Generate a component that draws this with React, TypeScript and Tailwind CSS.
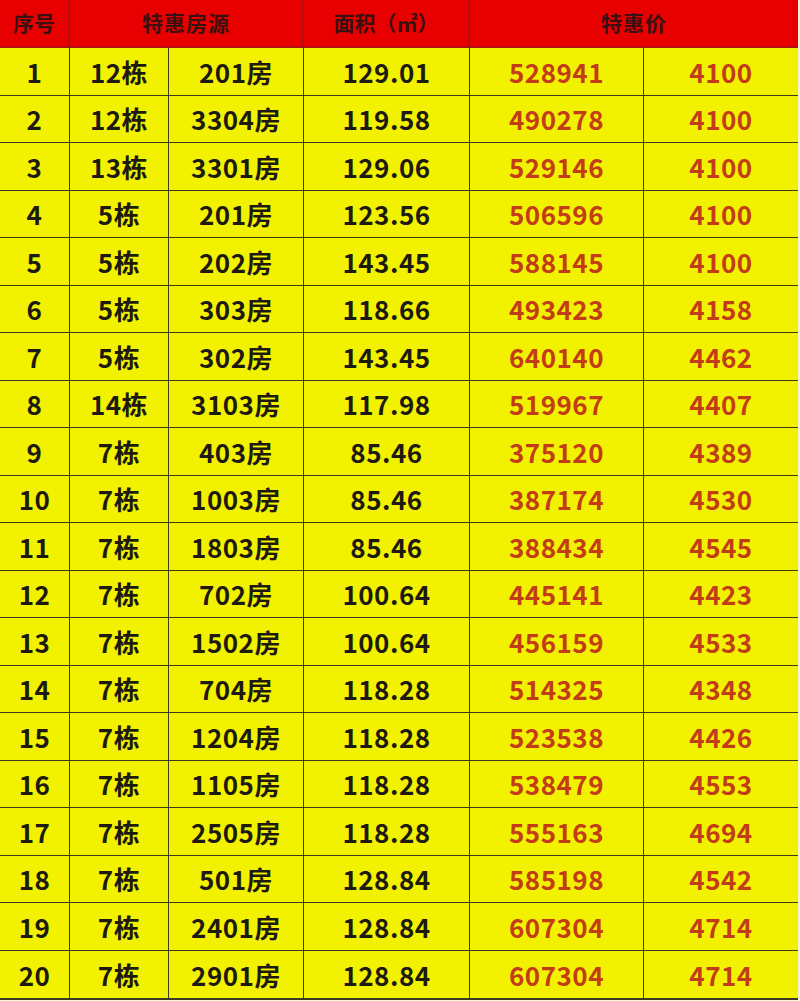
import React from "react";

const rows: [string, string, string, string, string, string][] = [
  ["1", "12栋", "201房", "129.01", "528941", "4100"],
  ["2", "12栋", "3304房", "119.58", "490278", "4100"],
  ["3", "13栋", "3301房", "129.06", "529146", "4100"],
  ["4", "5栋", "201房", "123.56", "506596", "4100"],
  ["5", "5栋", "202房", "143.45", "588145", "4100"],
  ["6", "5栋", "303房", "118.66", "493423", "4158"],
  ["7", "5栋", "302房", "143.45", "640140", "4462"],
  ["8", "14栋", "3103房", "117.98", "519967", "4407"],
  ["9", "7栋", "403房", "85.46", "375120", "4389"],
  ["10", "7栋", "1003房", "85.46", "387174", "4530"],
  ["11", "7栋", "1803房", "85.46", "388434", "4545"],
  ["12", "7栋", "702房", "100.64", "445141", "4423"],
  ["13", "7栋", "1502房", "100.64", "456159", "4533"],
  ["14", "7栋", "704房", "118.28", "514325", "4348"],
  ["15", "7栋", "1204房", "118.28", "523538", "4426"],
  ["16", "7栋", "1105房", "118.28", "538479", "4553"],
  ["17", "7栋", "2505房", "118.28", "555163", "4694"],
  ["18", "7栋", "501房", "128.84", "585198", "4542"],
  ["19", "7栋", "2401房", "128.84", "607304", "4714"],
  ["20", "7栋", "2901房", "128.84", "607304", "4714"],
];

const font = { fontFamily: '"Noto Sans CJK SC", "Noto Sans", sans-serif' };

export default function App() {
  return (
    <div className="w-[800px] h-[1001px] bg-[#f4f4d8] overflow-hidden" style={font}>
      <div className="grid grid-cols-[70px_99px_135px_166px_174px_154px] w-[798px] border-r-2 border-b-2 border-[#3a3a20]">
        <div className="h-[48px] bg-[#e80000] border-r-2 border-b-2 border-[#b01010] flex items-center justify-center text-[21px] font-bold text-[#3a1010]">序号</div>
        <div className="col-span-2 h-[48px] bg-[#e80000] border-r-2 border-b-2 border-[#b01010] flex items-center justify-center text-[21px] font-bold text-[#3a1010] tracking-[1px]">特惠房源</div>
        <div className="h-[48px] bg-[#e80000] border-r-2 border-b-2 border-[#b01010] flex items-center justify-center text-[21px] font-bold text-[#3a1010]">面积（㎡）</div>
        <div className="col-span-2 h-[48px] bg-[#e80000] border-b-2 border-[#b01010] flex items-center justify-center text-[21px] font-bold text-[#3a1010] tracking-[1px]">特惠价</div>
        {rows.map((r, i) => (
          <React.Fragment key={i}>
            {r.map((c, j) => (
              <div
                key={j}
                className={
                  "h-[47.5px] bg-[#f2f200] flex items-center justify-center text-[26px] font-bold tracking-[0.5px] border-[#3a3a20] " +
                  (j < 5 ? "border-r " : "") +
                  (i < rows.length - 1 ? "border-b " : "") +
                  (j >= 4 ? "text-[#c23c18]" : "text-[#1e1a10]")
                }
              >
                {c}
              </div>
            ))}
          </React.Fragment>
        ))}
      </div>
    </div>
  );
}
